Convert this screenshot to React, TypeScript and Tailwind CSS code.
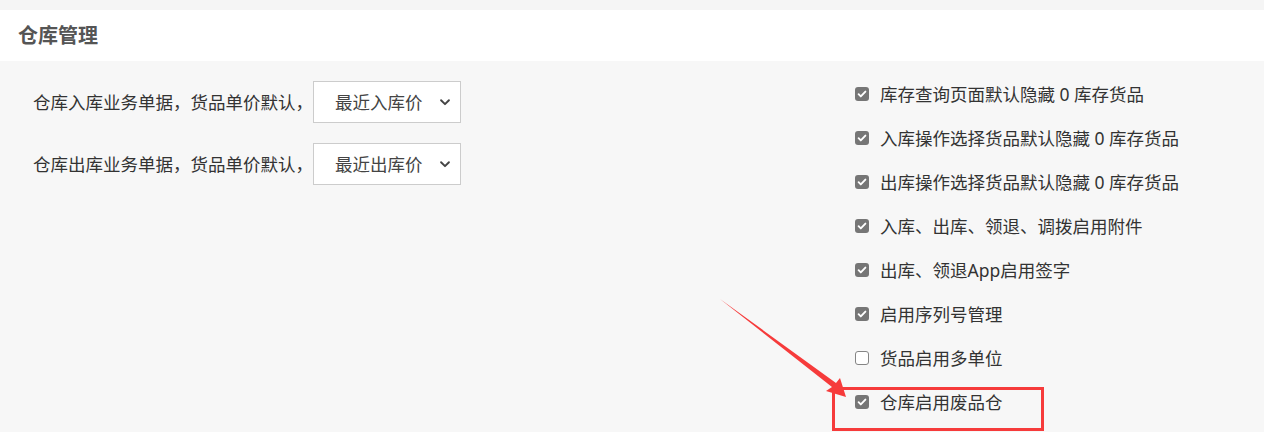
import React from 'react';

const font = { fontFamily: '"Noto Sans", "Noto Sans CJK SC", sans-serif' };

function Select({ value }: { value: string }) {
  return (
    <div className="flex h-[42px] w-[148px] items-center justify-between border border-[#cccccc] bg-white pl-[21px] pr-[8px] text-[17.5px] text-[#444]">
      <span>{value}</span>
      <svg width="14" height="14" viewBox="0 0 16 16" fill="none">
        <path d="M3.5 6l4.5 4.5L12.5 6" stroke="#444" strokeWidth="2.2" strokeLinecap="round" strokeLinejoin="round" />
      </svg>
    </div>
  );
}

function Check({ checked, label }: { checked: boolean; label: string }) {
  return (
    <div className="flex h-[44px] items-center">
      {checked ? (
        <span className="flex h-[14px] w-[14px] items-center justify-center rounded-[3px] bg-[#767676]">
          <svg width="10" height="10" viewBox="0 0 10 10" fill="none">
            <path d="M1.6 5.2l2.2 2.2L8.4 2.6" stroke="#fff" strokeWidth="1.9" strokeLinecap="round" strokeLinejoin="round" />
          </svg>
        </span>
      ) : (
        <span className="h-[14px] w-[14px] rounded-[3px] border border-[#858585] bg-white" />
      )}
      <span className="ml-[11px] text-[17.5px] text-[#333]">{label}</span>
    </div>
  );
}

const options = [
  { checked: true, label: '库存查询页面默认隐藏 0 库存货品' },
  { checked: true, label: '入库操作选择货品默认隐藏 0 库存货品' },
  { checked: true, label: '出库操作选择货品默认隐藏 0 库存货品' },
  { checked: true, label: '入库、出库、领退、调拨启用附件' },
  { checked: true, label: '出库、领退App启用签字' },
  { checked: true, label: '启用序列号管理' },
  { checked: false, label: '货品启用多单位' },
  { checked: true, label: '仓库启用废品仓' },
];

export default function App() {
  return (
    <div className="relative h-[443px] w-[1264px] overflow-hidden bg-white" style={font}>
      <div className="h-[10px] bg-[#f5f5f5]" />
      <div className="flex h-[51px] items-center pl-[18px] text-[20px] font-bold text-[#555]">仓库管理</div>

      {/* body */}
      <div className="flex h-[371px] bg-[#f7f7f7]">
        <div className="flex flex-col gap-[20px] pl-[33px] pt-[20px]">
          <div className="flex items-center">
            <span className="text-[17.5px] text-[#333]">仓库入库业务单据，货品单价默认，</span>
            <Select value="最近入库价" />
          </div>
          <div className="flex items-center">
            <span className="text-[17.5px] text-[#333]">仓库出库业务单据，货品单价默认，</span>
            <Select value="最近出库价" />
          </div>
        </div>
        <div className="ml-auto w-[409px] pt-[11px]">
          {options.map((o) => (
            <Check key={o.label} checked={o.checked} label={o.label} />
          ))}
        </div>
      </div>

      {/* annotation */}
      <div className="absolute left-[832px] top-[387px] h-[44px] w-[212px] border-[3px] border-[#f63b3b]" />
      <svg className="pointer-events-none absolute left-0 top-0" width="1264" height="443">
        <polygon points="720,299 836,383 840,378 846,397 826,391 832,387" fill="#f63b3b" />
      </svg>
    </div>
  );
}
